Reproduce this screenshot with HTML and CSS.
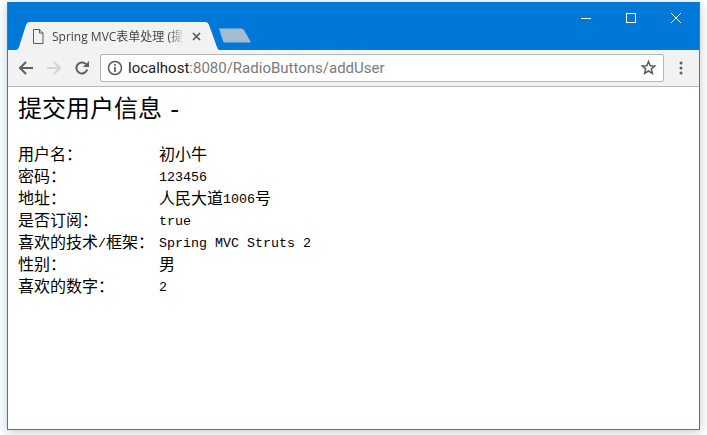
FILE: index.html
```html
<!DOCTYPE html>
<html lang="zh-CN">
<head>
<meta charset="utf-8">
<title>Spring MVC表单处理</title>
<link rel="stylesheet" href="styles.css">
</head>
<body>
<div class="window">
  <div class="titlebar">
    <div class="tab">
      <svg class="tab-shape" width="204" height="28" viewBox="0 0 204 28"><path d="M0 28 L1 28 Q3 28 4 25 L11 3 Q12 0 15 0 L190 0 Q193 0 194 3 L202 25 Q203 28 204 28 Z" fill="#f2f2f2"/></svg>
      <svg class="page-icon" width="12" height="15" viewBox="0 0 12 15"><path d="M1.5 .5H7.5L11 4V14.500H1.500Z M7.500 .5V4H11" fill="#f2f2f2" stroke="#5a5a5a"/></svg>
      <span class="tab-title">Spring MVC表单处理 (提</span>
      <svg class="tab-close" width="9" height="9" viewBox="0 0 9 9"><path d="M1 1L8 8M8 1L1 8" stroke="#5a5a5a" stroke-width="1.700"/></svg>
    </div>
    <svg class="new-tab" width="34" height="15" viewBox="0 0 34 15"><path d="M1 0.500H23Q25 .5 26 2L33 14.500H7Q5.500 14.500 5 13Z" fill="#a3bcd2"/></svg>
    <div class="controls">
      <svg width="10" height="10" viewBox="0 0 10 10"><path d="M0 5.500H10" stroke="#fff"/></svg>
      <svg width="10" height="10" viewBox="0 0 10 10"><rect x=".5" y=".5" width="9" height="9" fill="none" stroke="#fff"/></svg>
      <svg width="10" height="10" viewBox="0 0 10 10"><path d="M0 0L10 10M10 0L0 10" stroke="#fff"/></svg>
    </div>
  </div>
  <div class="toolbar">
    <svg class="nav" width="16" height="16" viewBox="0 0 16 16"><path d="M15 8H2M8 2L2 8L8 14" fill="none" stroke="#5f5f5f" stroke-width="2"/></svg>
    <svg class="nav" width="16" height="16" viewBox="0 0 16 16"><path d="M1 8H14M8 2L14 8L8 14" fill="none" stroke="#d4d4d4" stroke-width="2"/></svg>
    <svg class="nav" width="16" height="16" viewBox="0 0 16 16"><path d="M13.200 9.500A5.500 5.500 0 1 1 12 4.200" fill="none" stroke="#5f5f5f" stroke-width="2"/><path d="M15 1V7H9Z" fill="#5f5f5f"/></svg>
    <div class="omnibox">
      <svg width="16" height="16" viewBox="0 0 16 16"><circle cx="8" cy="8" r="6.500" fill="none" stroke="#5a5a5a" stroke-width="1.500"/><path d="M8 7V12M8 4V5.800" stroke="#5a5a5a" stroke-width="1.700"/></svg>
      <div class="url"><span class="host">localhost</span>:8080/RadioButtons/addUser</div>
      <svg width="15" height="15" viewBox="0 0 15 15"><path d="M7.500 1.500L9.200 5.700L13.800 6L10.300 8.900L11.400 13.400L7.500 11L3.600 13.400L4.700 8.900L1.200 6L5.800 5.700Z" fill="none" stroke="#5a5a5a" stroke-width="1.500"/></svg>
    </div>
    <svg class="menu" width="4" height="14" viewBox="0 0 4 14"><circle cx="2" cy="2" r="1.500" fill="#5f5f5f"/><circle cx="2" cy="7" r="1.500" fill="#5f5f5f"/><circle cx="2" cy="12" r="1.500" fill="#5f5f5f"/></svg>
  </div>
  <main class="content">
    <h2 class="heading">提交用户信息 <span class="dash">-</span></h2>
    <div class="info">
      <div>用户名：</div><div>初小牛</div>
      <div>密码：</div><div><span class="lat">123456</span></div>
      <div>地址：</div><div>人民大道<span class="lat">1006</span>号</div>
      <div>是否订阅：</div><div><span class="lat">true</span></div>
      <div>喜欢的技术<span class="lat">/</span>框架：</div><div><span class="lat">Spring MVC Struts 2</span></div>
      <div>性别：</div><div>男</div>
      <div>喜欢的数字：</div><div><span class="lat">2</span></div>
    </div>
  </main>
</div>
</body>
</html>
```
FILE: styles.css
```css
html, body {
  margin: 0;
  height: 100%;
  background: #fff;
  overflow: hidden;
}
body {
  padding: 2px 0 0 7px;
  box-sizing: border-box;
}
.window {
  width: 693px;
  height: 428px;
  box-sizing: border-box;
  border: 1px solid #1f83dd;
  border-top-color: #0078d7;
  display: flex;
  flex-direction: column;
  background: #fff;
  box-shadow: 0 2px 10px rgba(0, 0, 0, .22);
}
.titlebar {
  height: 47px;
  flex: none;
  background: #0078d7;
  display: flex;
  align-items: flex-end;
  padding-left: 7px;
  position: relative;
}
.tab {
  width: 204px;
  height: 28px;
  position: relative;
  display: flex;
  align-items: center;
  padding: 0 0 0 17px;
  box-sizing: border-box;
}
.tab-shape {
  position: absolute;
  left: 0;
  top: 0;
}
.page-icon, .tab-close {
  position: relative;
  flex: none;
}
.tab-title {
  position: relative;
  width: 133px;
  margin-left: 8px;
  white-space: nowrap;
  font: 12px "Open Sans", "Noto Sans CJK SC", sans-serif;
  color: #444;
  -webkit-mask-image: linear-gradient(90deg, #000 88%, transparent 100%);
  mask-image: linear-gradient(90deg, #000 88%, transparent 100%);
}
.tab-close {
  margin-left: 7px;
}
.new-tab {
  margin: 0 0 7px -1px;
}
.controls {
  position: absolute;
  top: 10px;
  right: 0;
  display: flex;
  gap: 35px;
  padding-right: 18px;
}
.toolbar {
  height: 37px;
  flex: none;
  box-sizing: border-box;
  background: #f2f2f2;
  border-bottom: 1px solid #b8b8b8;
  display: flex;
  align-items: center;
  padding: 0 16px 1px 10px;
  gap: 12px;
}
.omnibox {
  flex: 1;
  height: 28px;
  box-sizing: border-box;
  margin: 0 3px 0 -2px;
  background: #fff;
  border: 1px solid #b4b4b4;
  border-radius: 2px;
  display: flex;
  align-items: center;
  padding: 0 7px 0 6px;
  gap: 5px;
}
.url {
  flex: 1;
  font: 15px Roboto, "Noto Sans", sans-serif;
  color: #7a7a7a;
  white-space: nowrap;
}
.host {
  color: #222;
}
.content {
  flex: 1;
  padding: 0 10px;
  color: #000;
  font-family: "Noto Sans CJK SC", sans-serif;
}
.heading {
  margin: 6px 0 17px;
  font-size: 24px;
  line-height: 28px;
  font-weight: 400;
}
.dash {
  font-family: "Liberation Mono", monospace;
  font-weight: 400;
  font-size: 24px;
}
.info {
  display: grid;
  grid-template-columns: 141px 1fr;
  grid-auto-rows: 22px;
  font-size: 16px;
  line-height: 22px;
}
.lat {
  font-family: "Liberation Mono", monospace;
  font-size: 13.330px;
  vertical-align: 1px;
}
```
